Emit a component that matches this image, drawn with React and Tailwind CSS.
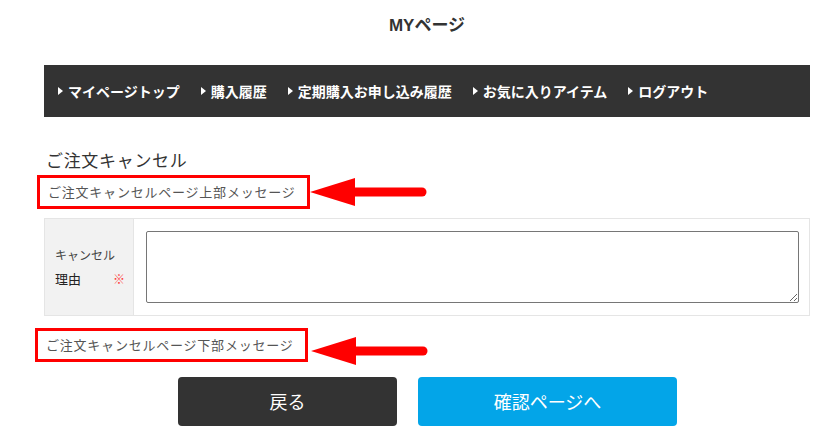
import React from "react";

const jp = { fontFamily: '"Noto Sans CJK JP", "Noto Sans", sans-serif' };

const navItems = ["マイページトップ", "購入履歴", "定期購入お申し込み履歴", "お気に入りアイテム", "ログアウト"];

function Arrow({ className }) {
  return (
    <svg width="118" height="30" viewBox="0 0 118 30" className={"shrink-0 " + (className || "")}>
      <polygon points="0,15 45,1 45,29" fill="#ff0000" />
      <line x1="44" y1="15" x2="112" y2="15" stroke="#ff0000" strokeWidth="9" strokeLinecap="round" />
    </svg>
  );
}

function MessageBox({ text, arrowClass }) {
  return (
    <div className="flex items-center">
      <div className="border-[3px] border-[#ff0000] h-[34px] w-[273px] flex items-center pl-[8px] text-[13px] text-[#555] tracking-[0.06em]">
        {text}
      </div>
      <Arrow className={arrowClass} />
    </div>
  );
}

export default function App() {
  return (
    <div className="w-[833px] h-[439px] bg-white text-[#333] overflow-hidden" style={jp}>
      <div className="ml-[44px] w-[766px]">
        <h1
          className="h-[50px] flex items-center justify-center text-[17px] font-bold pt-[2px]"
          style={{ fontFamily: '"Liberation Sans", "Noto Sans CJK JP", sans-serif' }}
        >
          MYページ
        </h1>
        <nav className="mt-[15px] h-[52px] bg-[#333] flex items-center pl-[14px] gap-[21px]">
          {navItems.map((n) => (
            <a key={n} className="flex items-center text-white text-[14px] font-bold">
              <span className="w-0 h-0 border-y-[4px] border-y-transparent border-l-[5px] border-l-white mr-[5px]" />
              {n}
            </a>
          ))}
        </nav>
        <h2 className="mt-[32px] ml-[2px] text-[17px] leading-[22px] tracking-[0.04em]">ご注文キャンセル</h2>
        <div className="-ml-[7px] mt-[4px]">
          <MessageBox text="ご注文キャンセルページ上部メッセージ" />
        </div>
        <div className="mt-[9px] border border-[#e5e5e5] flex h-[98px]">
          <div className="w-[89px] bg-[#f2f2f2] border-r border-[#e5e5e5] flex flex-col justify-center pl-[10px] pr-[8px] text-[12px] leading-[24px] whitespace-nowrap">
            <span className="text-[#444]">キャンセル</span>
            <span className="flex justify-between text-[13px]">
              <span className="text-[#222]">理由</span>
              <span className="text-[#ff3b3b] text-[12px]">※</span>
            </span>
          </div>
          <div className="flex-1 pl-[12px] pr-[10px] pt-[12px]">
            <textarea className="block w-full h-[72px] border border-[#767676] rounded-[2px] bg-white" />
          </div>
        </div>
        <div className="-ml-[9px] mt-[12px]">
          <MessageBox text="ご注文キャンセルページ下部メッセージ" arrowClass="translate-y-[6px] ml-[3px]" />
        </div>
        <div className="mt-[15px] flex justify-center gap-[21px] pl-[1px]">
          <button className="w-[219px] h-[49px] bg-[#333] text-white text-[18px] rounded-[4px]">戻る</button>
          <button className="w-[259px] h-[49px] bg-[#03a5e8] text-white text-[18px] rounded-[4px]">確認ページへ</button>
        </div>
      </div>
    </div>
  );
}
